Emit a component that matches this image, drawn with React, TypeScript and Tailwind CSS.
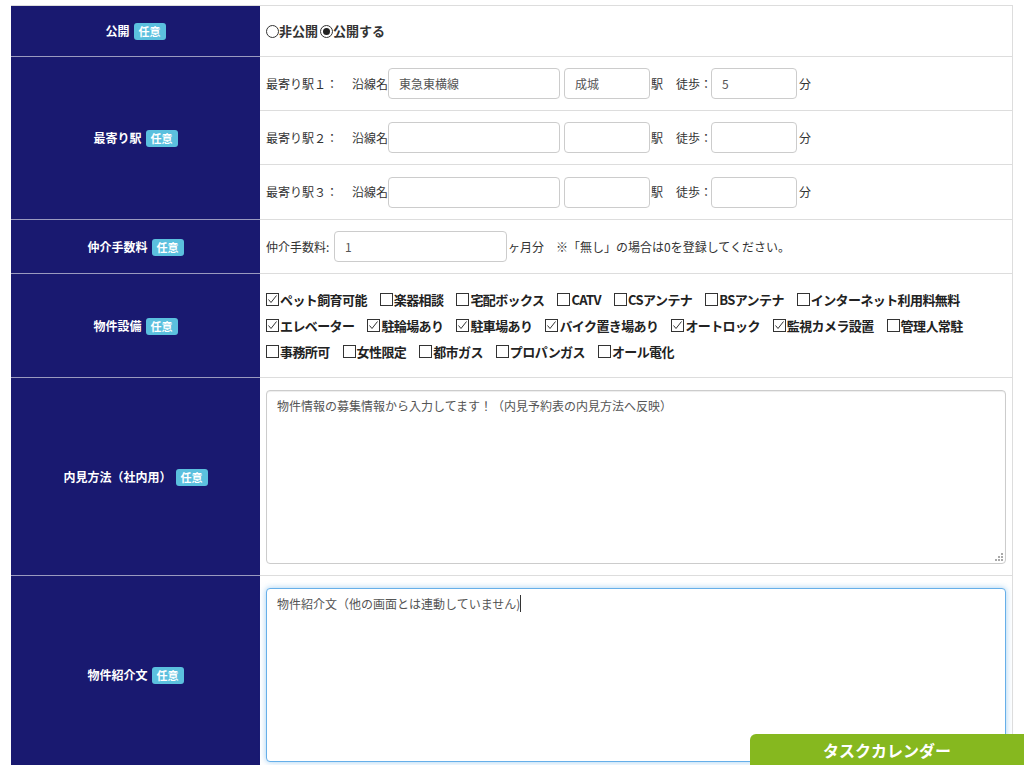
import React from "react";

const FONT = { fontFamily: '"Noto Sans CJK JP", "Noto Sans", sans-serif' };

function Badge() {
  return (
    <span className="ml-[4px] inline-block rounded-[3px] bg-[#5bc0de] px-[5px] py-[1px] text-[11px] font-bold leading-[15px] text-white">
      任意
    </span>
  );
}

function Label({ children, h }: { children: React.ReactNode; h: string }) {
  return (
    <td
      className={`w-[249px] border-b border-[#9a9abf] bg-[#191970] p-0 text-center align-middle text-[12px] font-bold text-white ${h}`}
    >
      <span>{children}</span>
      <Badge />
    </td>
  );
}

function Box({ checked }: { checked: boolean }) {
  return (
    <span className="relative mr-[1px] inline-block h-[13px] w-[13px] shrink-0 border border-[#333] bg-white">
      {checked && (
        <svg viewBox="0 0 13 13" className="absolute left-[-1px] top-[-1px] h-[13px] w-[13px]">
          <path d="M2.5 6.5 L5 9.5 L10.5 2.5" fill="none" stroke="#333" strokeWidth="1" />
        </svg>
      )}
    </span>
  );
}

function Radio({ checked }: { checked: boolean }) {
  return (
    <span className="relative inline-flex h-[13px] w-[13px] items-center justify-center rounded-full border border-[#333] bg-white">
      {checked && <span className="h-[7px] w-[7px] rounded-full bg-[#222]" />}
    </span>
  );
}

function Input({ w, value }: { w: string; value?: string }) {
  return (
    <div
      className={`flex h-[31px] shrink-0 items-center rounded-[4px] border border-[#ccc] bg-white pl-[10px] text-[12px] text-[#555] ${w}`}
    >
      {value}
    </div>
  );
}

function Station({ n, line, st, walk, last }: { n: string; line?: string; st?: string; walk?: string; last?: boolean }) {
  return (
    <div
      className={`flex h-[54px] items-center whitespace-nowrap pl-[6px] text-[12px] text-[#333] ${last ? "" : "border-b border-[#ddd]"}`}
    >
      <span className="w-[86px] shrink-0">最寄り駅{n}：</span>
      <span className="w-[36px] shrink-0">沿線名</span>
      <Input w="w-[172px]" value={line} />
      <span className="w-[4px] shrink-0" />
      <Input w="w-[86px]" value={st} />
      <span className="ml-[1px] w-[12px] shrink-0">駅</span>
      <span className="ml-[13px] w-[35px] shrink-0">徒歩：</span>
      <Input w="w-[86px]" value={walk} />
      <span className="ml-[2px] shrink-0">分</span>
    </div>
  );
}

const equip: [string, boolean][][] = [
  [
    ["ペット飼育可能", true],
    ["楽器相談", false],
    ["宅配ボックス", false],
    ["CATV", false],
    ["CSアンテナ", false],
    ["BSアンテナ", false],
    ["インターネット利用料無料", false],
  ],
  [
    ["エレベーター", true],
    ["駐輪場あり", true],
    ["駐車場あり", true],
    ["バイク置き場あり", true],
    ["オートロック", true],
    ["監視カメラ設置", true],
    ["管理人常駐", false],
  ],
  [
    ["事務所可", false],
    ["女性限定", false],
    ["都市ガス", false],
    ["プロパンガス", false],
    ["オール電化", false],
  ],
];

export default function App() {
  return (
    <div className="min-h-[765px] bg-white" style={FONT}>
      <div className="pl-[11px] pt-[5px]">
        <table className="w-[1002px] border-collapse border-t border-[#ddd]">
          <tbody>
            <tr>
              <Label h="h-[51px]">公開</Label>
              <td className="border-b border-r border-[#ddd] pl-[6px] align-middle">
                <div className="flex items-center text-[13px] font-bold text-[#333]">
                  <Radio checked={false} />
                  <span className="mr-[2px]">非公開</span>
                  <Radio checked={true} />
                  <span>公開する</span>
                </div>
              </td>
            </tr>
            <tr>
              <Label h="h-[163px]">最寄り駅</Label>
              <td className="border-b border-r border-[#ddd] p-0 align-top">
                <Station n="１" line="東急東横線" st="成城" walk="5" />
                <Station n="２" />
                <Station n="３" last />
              </td>
            </tr>
            <tr>
              <Label h="h-[54px]">仲介手数料</Label>
              <td className="border-b border-r border-[#ddd] pl-[6px] align-middle">
                <div className="flex items-center whitespace-nowrap text-[12px] text-[#333]">
                  <span className="mr-[4px] w-[64px] shrink-0">仲介手数料:</span>
                  <Input w="w-[173px]" value="1" />
                  <span className="ml-[1px]">ヶ月分</span>
                  <span className="ml-[12px]">※「無し」の場合は0を登録してください。</span>
                </div>
              </td>
            </tr>
            <tr>
              <Label h="h-[104px]">物件設備</Label>
              <td className="border-b border-r border-[#ddd] pl-[6px] align-middle">
                <div className="flex flex-col gap-0 text-[13px] font-bold text-[#222]">
                  {equip.map((line, i) => (
                    <div key={i} className="flex h-[26px] items-center gap-[13px] whitespace-nowrap">
                      {line.map(([t, c]) => (
                        <span key={t} className="flex items-center tracking-[-0.6px]">
                          <Box checked={c} />
                          <span>{t}</span>
                        </span>
                      ))}
                    </div>
                  ))}
                </div>
              </td>
            </tr>
            <tr>
              <Label h="h-[198px]">内見方法（社内用）</Label>
              <td className="border-b border-r border-[#ddd] px-[6px] align-middle">
                <div className="relative h-[174px] w-[740px] rounded-[4px] border border-[#ccc] bg-white px-[10px] pt-[6px] text-[12px] text-[#555] shadow-[inset_0_1px_1px_rgba(0,0,0,0.075)]">
                  物件情報の募集情報から入力してます！（内見予約表の内見方法へ反映）
                  <svg viewBox="0 0 9 9" className="absolute bottom-[2px] right-[2px] h-[9px] w-[9px]">
                    <g fill="#aaa">
                      <rect x="7" y="1" width="2" height="2" />
                      <rect x="4" y="4" width="2" height="2" />
                      <rect x="7" y="4" width="2" height="2" />
                      <rect x="1" y="7" width="2" height="2" />
                      <rect x="4" y="7" width="2" height="2" />
                      <rect x="7" y="7" width="2" height="2" />
                    </g>
                  </svg>
                </div>
              </td>
            </tr>
            <tr>
              <Label h="h-[198px]">物件紹介文</Label>
              <td className="border-b border-r border-[#ddd] px-[6px] pt-[12px] align-top">
                <div className="h-[174px] w-[740px] rounded-[4px] border border-[#66afe9] bg-white px-[10px] pt-[6px] text-[12px] text-[#555] shadow-[0_0_6px_rgba(102,175,233,0.6)]">
                  物件紹介文（他の画面とは連動していません<span className="border-r border-[#333]">)</span>
                </div>
              </td>
            </tr>
          </tbody>
        </table>
      </div>
      <div className="fixed bottom-0 right-0 flex h-[31px] w-[274px] items-center justify-center rounded-tl-[6px] bg-[#86b81f] text-[16px] font-bold text-white">
        タスクカレンダー
      </div>
    </div>
  );
}
